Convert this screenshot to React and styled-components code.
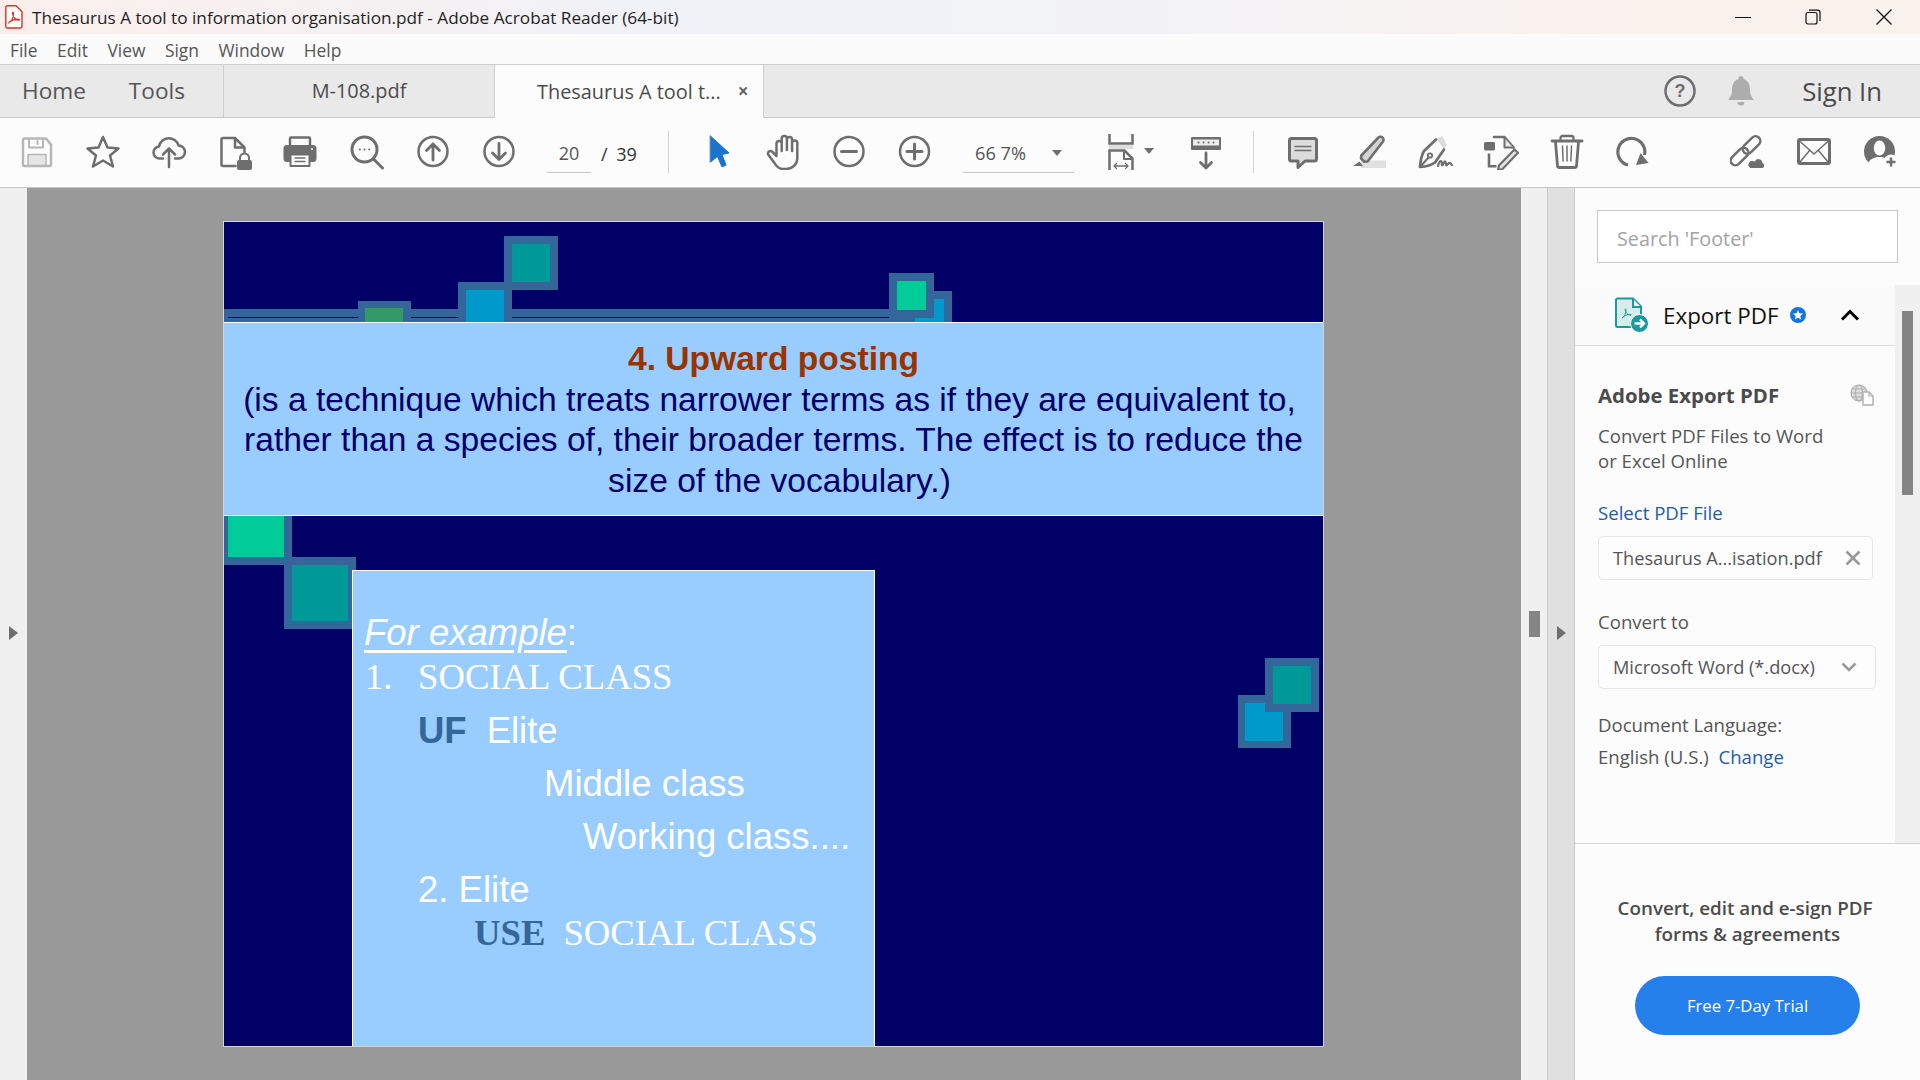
import React from "react";
import styled, { createGlobalStyle } from "styled-components";

const UI = `"Open Sans", "Noto Sans", sans-serif`;
const ARIAL = `"Liberation Sans", Arial, sans-serif`;
const TIMES = `"Liberation Serif", "Times New Roman", serif`;
const G = "#6e6e6e";

const Global = createGlobalStyle`
  html, body { margin: 0; padding: 0; background: #fff; overflow: hidden; }
  * { box-sizing: border-box; }
  #root { width: 1920px; height: 1080px; }
`;

const Shell = styled.div`
  width: 1920px; height: 1080px; display: flex; flex-direction: column; overflow: hidden;
  font-family: ${UI}; color: #444;
`;
const TitleBar = styled.div`
  height: 34px; flex: none; display: flex; align-items: center; padding-left: 5px;
  background: linear-gradient(90deg, #fbefec 0, #f0f2f7 35%, #f2f2f6 60%, #f9f1ec 85%);
`;
const TitleText = styled.span`
  margin-left: 9px; font-size: 17.2px; color: #1f1f1f; white-space: nowrap;
`;
const WinControls = styled.div`
  margin-left: auto; display: flex; padding-right: 1px;
`;
const WinCell = styled.div`
  width: 70.5px; height: 34px; display: flex; align-items: center; justify-content: center;
`;
const MenuBar = styled.div`
  height: 31px; flex: none; display: flex; align-items: center; gap: 19.5px; padding: 1px 0 0 10px;
  background: #fbfbfb; border-bottom: 1px solid #cdcdcd;
`;
const MenuItem = styled.span`
  font-size: 17.4px; color: #555;
`;
const TabBar = styled.div`
  height: 53px; flex: none; display: flex; background: #e9e9e9; border-bottom: 1px solid #c8c8c8;
`;
const HomeGroup = styled.div`
  width: 224px; height: 52px; display: flex; align-items: center; gap: 43px; padding: 0 0 2px 22px;
  border-right: 1px solid #cfcfcf;
`;
const NavLink = styled.span`
  font-size: 22.6px; color: #555;
`;
const Tab = styled.div`
  width: 270px; height: ${(p) => (p.$active ? 53 : 52)}px;
  display: flex; align-items: center; font-size: 19.9px; color: #4b4b4b; padding-bottom: 1px;
  justify-content: ${(p) => (p.$active ? "flex-start" : "center")};
  padding-left: ${(p) => (p.$active ? 42 : 0)}px;
  background: ${(p) => (p.$active ? "#fcfcfc" : "transparent")};
  border-left: ${(p) => (p.$active ? "1px solid #cfcfcf" : "0")};
  border-right: ${(p) => (p.$active ? "1px solid #cfcfcf" : "0")};
`;
const TabClose = styled.span`
  margin-left: 17px; font-size: 19px; font-weight: 700; color: #666; line-height: 1;
`;
const TabRight = styled.div`
  margin-left: auto; height: 52px; display: flex; align-items: center; padding-right: 38px;
`;
const SignIn = styled.span`
  margin-left: 46px; font-size: 25.7px; color: #4b4b4b; font-weight: 500;
`;
const BellWrap = styled.div`
  margin-left: 30px; display: flex;
`;
const Toolbar = styled.div`
  height: 70px; flex: none; display: flex; align-items: flex-start; padding: 16px 0 0 4px;
  background: #fcfcfc; border-bottom: 1px solid #c8c8c8;
`;
const Cell = styled.div`
  width: ${(p) => p.$w || 66}px; height: 36px; flex: none; display: flex; justify-content: center;
  margin-left: ${(p) => p.$ml || 0}px;
`;
const PageBox = styled.div`
  width: 44px; height: 39px; margin-left: 15px; border-bottom: 1px solid #c8c8c8;
  display: flex; align-items: center; justify-content: center; font-size: 18px; color: #555;
`;
const PageTotal = styled.div`
  margin-left: 10px; height: 39px; display: flex; align-items: center; font-size: 18px; color: #333;
  width: 37px; white-space: nowrap; word-spacing: 4px;
`;
const VDivider = styled.div`
  width: 1px; height: 42px; margin: -3px 0 0 ${(p) => p.$ml || 30}px; background: #d4d4d4; flex: none;
`;
const ZoomBox = styled.div`
  width: 111px; height: 39px; margin-left: 17px; border-bottom: 1px solid #c8c8c8; padding-left: 12px;
  display: flex; align-items: center; font-size: 18.2px; color: #555;
`;
const Caret = styled.div`
  width: 0; height: 0; flex: none; border-left: 5.5px solid transparent; border-right: 5.5px solid transparent;
  border-top: 6px solid ${G}; margin-left: ${(p) => p.$ml || 0}px; margin-top: ${(p) => p.$mt || 0}px;
`;
const Main = styled.div`
  flex: 1; min-height: 0; display: flex;
`;
const Rail = styled.div`
  width: ${(p) => p.$w}px; flex: none; background: ${(p) => p.$bg}; display: flex; align-items: center;
  justify-content: center; border-right: ${(p) => (p.$line ? "1px solid #c8c8c8" : "0")};
  padding-bottom: ${(p) => p.$pb || 0}px;
`;
const Arrow = styled.div`
  width: 0; height: 0; border-top: 7.5px solid transparent; border-bottom: 7.5px solid transparent;
  border-left: 9px solid ${G};
`;
const Canvas = styled.div`
  flex: 1; background: #999; padding: 33px 0 0 196px; overflow: hidden;
`;
const ScrollKnob = styled.div`
  width: 11px; height: 26px; background: #848484;
`;
const Slide = styled.div`
  width: 1101px; height: 826px; background: #000066; border: 1px solid #d2d2d2; position: relative;
  padding-top: 100px;
`;
const Decor = styled.svg`
  position: absolute; left: 0; top: 0;
`;
const Band = styled.div`
  position: relative; height: 194px; background: #99ccff; border-top: 1px solid #fff; border-bottom: 1px solid #fff;
  padding-top: 16px; text-align: center; font-family: ${ARIAL}; font-size: 33.6px; line-height: 40.5px; color: #000066;
`;
const BandTitle = styled.div`
  font-weight: 700; color: #993300;
`;
const BandLine = styled.div`
  white-space: nowrap; padding-left: ${(p) => p.$pl || 0}px; padding-right: ${(p) => p.$pr || 0}px;
`;
const ExampleBox = styled.div`
  position: relative; width: 523px; height: 476px; margin: 54px 0 0 128px; background: #99ccff;
  border: 1px solid #fff; border-bottom: 0; padding-top: 40px; color: #fff;
`;
const ExRow = styled.div`
  height: 44px; line-height: 44px; white-space: nowrap; margin-top: ${(p) => p.$mt || 0}px;
  padding-left: ${(p) => p.$indent}px; font-family: ${(p) => (p.$serif ? TIMES : ARIAL)};
  font-size: ${(p) => (p.$serif ? 36.7 : 36.5)}px; display: flex;
`;
const Under = styled.span`
  font-style: italic; text-decoration: underline; text-decoration-thickness: 3px; text-underline-offset: 5px;
`;
const ListNum = styled.span`
  width: 53px; flex: none;
`;
const Term = styled.span`
  font-weight: 700; color: #336699; margin-right: ${(p) => p.$mr}px;
`;
const Panel = styled.div`
  width: 345px; flex: none; background: #fcfcfc; display: flex; flex-direction: column;
`;
const SearchWrap = styled.div`
  height: 97px; flex: none; padding: 22px 22px 0;
`;
const SearchBox = styled.div`
  width: 301px; height: 53px; background: #fff; border: 1px solid #c8c8c8; display: flex; align-items: center;
  padding: 3px 0 0 19px; font-size: 19.8px; color: #a3a3a3;
`;
const PanelBody = styled.div`
  height: 558px; flex: none; display: flex;
`;
const PanelContent = styled.div`
  width: 320px; flex: none;
`;
const ExportRow = styled.div`
  height: 61px; display: flex; align-items: center; border-bottom: 1px solid #dcdcdc; padding: 0 0 0 40px;
  background: #fafafa;
`;
const ExportLabel = styled.span`
  margin-left: 14px; font-size: 22.4px; color: #111;
`;
const Badge = styled.div`
  margin-left: 11px; display: flex;
`;
const Chevron = styled.div`
  margin-left: 34px; display: flex;
`;
const Section = styled.div`
  padding-left: 23px;
`;
const SecHead = styled.div`
  height: 26px; margin-top: 36px; display: flex; align-items: center; justify-content: space-between; padding-right: 21px;
  font-size: 20.4px; font-weight: 700; color: #4b4b4b; white-space: nowrap;
`;
const Text = styled.div`
  font-size: 18.6px; line-height: ${(p) => p.$lh || 24}px; margin-top: ${(p) => p.$mt || 0}px; color: #555; white-space: nowrap;
`;
const LinkText = styled.span`
  color: #1b5dab;
`;
const Field = styled.div`
  width: ${(p) => p.$w}px; height: 44px; margin-top: 11px; border: 1px solid #e6e6e6; border-radius: 5px;
  display: flex; align-items: center; justify-content: space-between; padding: 0 ${(p) => p.$pr}px 0 14px;
  font-size: 18.2px; color: #555; background: #fdfdfd; white-space: nowrap;
`;
const Track = styled.div`
  width: 25px; flex: none; background: #f0f0f0; padding: 26px 0 0 7px;
`;
const Thumb = styled.div`
  width: 11px; height: 184px; background: #848484;
`;
const Promo = styled.div`
  flex: 1; border-top: 1px solid #d4d4d4; display: flex; flex-direction: column; align-items: center; padding-top: 52px;
`;
const PromoText = styled.div`
  font-size: 18.8px; line-height: 25.5px; font-weight: 600; color: #4b4b4b; text-align: center; white-space: nowrap;
`;
const Trial = styled.div`
  width: 225px; height: 59px; margin-top: 29px; border-radius: 30px; background: #2680eb; color: #fff;
  display: flex; align-items: center; justify-content: center; font-size: 16.7px;
`;

const Ic = ({ children, w = 36, h = 36, vb }) => (
  <svg width={w} height={h} viewBox={vb || `0 0 ${w} ${h}`} fill="none" stroke={G} strokeWidth="2.5" strokeLinecap="round" strokeLinejoin="round">
    {children}
  </svg>
);

const Save = () => (
  <Ic>
    <g stroke="#b7b7b7">
      <path d="M5.5 4.5H27l5 6v20a1.5 1.5 0 0 1-1.5 1.5h-25A1.5 1.5 0 0 1 4 30.5V6a1.5 1.5 0 0 1 1.5-1.5z" />
      <path d="M10 5v8.5h14V5" strokeWidth="2" />
      <rect x="9" y="20.5" width="18" height="11" fill="#e6e6e6" strokeWidth="1.5" />
      <path d="M18.5 7v3" strokeWidth="2" />
    </g>
  </Ic>
);
const Star = () => (
  <Ic><polygon points="18,3 22.5,13.5 33.5,14.5 25,21.5 28,32.5 18,26.5 8,32.5 11,21.5 2.5,14.5 13.5,13.5" /></Ic>
);
const Cloud = () => (
  <Ic>
    <path d="M12 24.5H9a6 6 0 0 1-1-12A10 10 0 0 1 27.5 11.5a6.5 6.5 0 0 1 0 13H24" />
    <path d="M18 33V15M12 20.5l6-6 6 6" />
  </Ic>
);
const DocLock = () => (
  <Ic>
    <path d="M18.5 32H6a1.5 1.5 0 0 1-1.5-1.5v-25A1.5 1.5 0 0 1 6 4h12l9.5 9.5V18M18 4v9.5h9.5" />
    <path d="M23 26.5V24a4.5 4.5 0 0 1 9 0v2.5" strokeWidth="2" />
    <rect x="20" y="26" width="15" height="10" rx="2" fill={G} stroke="none" />
  </Ic>
);
const Printer = () => (
  <svg width="36" height="36" viewBox="1 0 36 36" fill="none" stroke={G} strokeWidth="2.5" strokeLinecap="round" strokeLinejoin="round">
    <path d="M8 12V4.5a1 1 0 0 1 1-1h18a1 1 0 0 1 1 1V12" />
    <rect x="1.5" y="11" width="33" height="17" rx="3.5" fill={G} stroke="none" />
    <rect x="8.5" y="20.5" width="19" height="11.5" fill="#fcfcfc" strokeWidth="2" />
    <path d="M13 24h10M13 27.5h10" strokeWidth="1.3" />
    <circle cx="30" cy="15" r="1" fill="#fff" stroke="none" />
  </svg>
);
const SearchIc = () => (
  <Ic>
    <circle cx="15.5" cy="15.5" r="12.5" strokeWidth="3" />
    <path d="M24.5 25l9 9" strokeWidth="3" />
    <path d="M10.8 15.5h.1M15.5 15.5h.1M20.2 15.5h.1" strokeWidth="2" />
  </Ic>
);
const CircleArrow = ({ up }) => (
  <Ic>
    <circle cx="18" cy="17.5" r="14.5" />
    {up ? <path d="M18 26V10M11.5 16.5L18 10l6.5 6.5" strokeWidth="2.8" /> : <path d="M18 9.5v16M11.5 19L18 25.5l6.5-6.5" strokeWidth="2.8" />}
  </Ic>
);
const Cursor = () => (
  <Ic><polygon points="9.5,2 28,19 21,20.5 25,31 21,33 16.5,22.5 9.5,28" fill="#1b73cc" stroke="#1b73cc" strokeWidth="1" /></Ic>
);
const Hand = () => (
  <Ic>
    <path d="M10.5 20V9.5a2.6 2.6 0 0 1 5.2 0V17M15.7 16V4.5a2.6 2.6 0 0 1 5.2 0V16M20.9 16V5.5a2.6 2.6 0 0 1 5.2 0V17M26.1 17V9a2.6 2.6 0 0 1 5.2 0v15.5C31.3 30.5 26 35 20 35h-3c-4.5 0-6.5-2.5-8.5-6l-6-8a2.5 2.5 0 0 1 4-3l4 4" />
  </Ic>
);
const ZoomOut = () => (
  <Ic><circle cx="18" cy="17.5" r="14.5" /><path d="M10.5 17.5h15" strokeWidth="3" /></Ic>
);
const ZoomIn = () => (
  <Ic><circle cx="18.5" cy="17.5" r="14.5" /><path d="M11 17.5h15M18.5 10v15" strokeWidth="3" /></Ic>
);
const Fit = () => (
  <Ic>
    <path d="M6.5 0v9.5h23V0" strokeLinecap="butt" strokeLinejoin="miter" />
    <rect x="6" y="11" width="24" height="4" fill="#dedede" stroke="none" />
    <path d="M6.5 36V16.5h15l8 8V36" strokeLinecap="butt" strokeLinejoin="miter" />
    <path d="M21 16.5V25h8.5" strokeWidth="2" strokeLinecap="butt" />
    <path d="M11 32h14M13.5 29.5L11 32l2.5 2.5M22.5 29.5L25 32l-2.5 2.5" strokeWidth="1.3" />
  </Ic>
);
const Reader = () => (
  <Ic>
    <rect x="3" y="3" width="30" height="13" rx="1" fill={G} stroke="none" />
    <rect x="5" y="5.5" width="26" height="6" fill="#ececec" stroke="none" />
    <path d="M10.5 8.5h.1M15.5 8.5h.1M20.5 8.5h.1M25.5 8.5h.1" strokeWidth="2" />
    <path d="M18 34V19M12.5 28.5L18 34l5.5-5.5" strokeWidth="2.8" />
  </Ic>
);
const Comment = () => (
  <Ic>
    <path d="M6.5 4.5h23a2 2 0 0 1 2 2V25a2 2 0 0 1-2 2H20l-7 6.5V27H6.5a2 2 0 0 1-2-2V6.5a2 2 0 0 1 2-2z" fill="#dcdcdc" strokeWidth="3" />
    <path d="M10 12.5h16M10 16.5h16" strokeWidth="1.3" />
  </Ic>
);
const Highlighter = () => (
  <Ic>
    <rect x="10" y="26.5" width="25" height="7.5" fill="#e0e0e0" stroke="none" />
    <path d="M27 4a3 3 0 0 1 5 3.5L18.5 25l-2 2.5-3 .2-3.5-3.2.3-3z" fill="#d4d4d4" strokeWidth="2.6" />
    <path d="M8.5 27.5l3.5 4.5H2z" fill={G} stroke="none" />
  </Ic>
);
const Pen = () => (
  <Ic>
    <polygon points="19,5 25,2 30,11 27,15" fill="#dcdcdc" stroke="none" />
    <path d="M19 5.5L7 17c-2.5 4-3.5 10-4 16 6-.5 11-1.5 15-4.5l9-13" strokeWidth="2.7" />
    <path d="M3.5 32.5l8-9" strokeWidth="2" />
    <circle cx="13" cy="21.5" r="2.2" strokeWidth="1.8" />
    <path d="M21 32c1-4 2.5-6 3.5-4.5s-.5 4.5 1 3.5 2-5 3-3 0 4 1.5 3 1.5-2.5 3-2 1 2 2 2" strokeWidth="2.2" />
  </Ic>
);
const EditDoc = () => (
  <Ic>
    <path d="M11 3h10.5l9 10.5" strokeWidth="2.6" />
    <path d="M21.5 4v9.5H30" fill="#e6e6e6" strokeWidth="2" />
    <rect x="1" y="8" width="11" height="8.5" rx="1.5" fill={G} stroke="none" />
    <path d="M6 19.5v12.7h7.5" strokeWidth="2.6" strokeLinecap="butt" strokeLinejoin="miter" />
    <path d="M31.5 15.5l3.5 3.2L19.5 35l-4.5 1 1-4.5z" fill="#e6e6e6" strokeWidth="2.2" />
  </Ic>
);
const Trash = () => (
  <Ic>
    <path d="M3 7h30" strokeWidth="2.8" />
    <path d="M11.5 6V4a2 2 0 0 1 2-2h9a2 2 0 0 1 2 2v2" strokeWidth="2.3" />
    <path d="M6.5 8l2 24a1.8 1.8 0 0 0 1.8 1.5h15.4a1.8 1.8 0 0 0 1.8-1.5l2-24" strokeWidth="2.8" />
    <path d="M13.5 12l.6 15M18 12v15M22.5 12l-.6 15" strokeWidth="1.5" />
  </Ic>
);
const Rotate = () => (
  <Ic>
    <path d="M13 31A13.5 13.5 0 1 1 29.5 21" strokeWidth="3.2" strokeLinecap="butt" />
    <polygon points="21,31 33.5,29 25.5,19" fill={G} stroke="none" />
  </Ic>
);
const LinkCloud = () => (
  <Ic>
    <rect x="16.75" y=".5" width="9.5" height="21" rx="4.75" transform="rotate(45 21.5 11)" />
    <rect x="4.75" y="12" width="9.5" height="21" rx="4.75" transform="rotate(45 9.5 22.5)" />
    <path d="M20 34.5h12a3 3 0 0 0 1-5.8 4.5 4.5 0 0 0-8.5-1.7 3.5 3.5 0 0 0-4.5 7.5z" fill={G} stroke="#fcfcfc" strokeWidth="1.2" />
  </Ic>
);
const Mail = () => (
  <Ic>
    <rect x="2.5" y="5.5" width="31" height="24" rx="1.5" strokeWidth="3" />
    <path d="M3.5 7L18 20 32.5 7M3.5 28.5L14 16M32.5 28.5L22 16" strokeWidth="1.5" />
  </Ic>
);
const UserAdd = () => (
  <Ic>
    <circle cx="17.5" cy="17.5" r="15.5" fill={G} stroke="none" />
    <ellipse cx="17.5" cy="14" rx="5.8" ry="7.5" fill="#fcfcfc" stroke="none" />
    <path d="M6 30c1.5-5 6-7 11.5-7S27 25 29 30c-3 2.5-7 3.5-11.5 3.5S9 32.5 6 30z" fill="#fcfcfc" stroke="none" />
    <circle cx="29" cy="28" r="7.5" fill="#fcfcfc" stroke="none" />
    <path d="M29 23.5v9M24.5 28h9" strokeWidth="2.5" strokeLinecap="butt" />
  </Ic>
);
const PdfLogo = () => (
  <svg width="18" height="24" viewBox="0 0 18 24" fill="none">
    <path d="M2.5 .8H11l6 6V21a2 2 0 0 1-2 2H2.5a1.7 1.7 0 0 1-1.7-1.7V2.5A1.7 1.7 0 0 1 2.5 .8z" fill="#fff" stroke="#e0301e" strokeWidth="1.4" />
    <path d="M4 17.5c2.5-1.5 4.5-5.5 4.5-9 0-1.5-1.2-1.5-1 .3.4 3 3 6 6 6.3 1.5 0 1.3-1-.3-1-3-.1-6.5 1.2-9 3z" stroke="#e0301e" strokeWidth="1.2" />
  </svg>
);
const ExportIcon = () => (
  <svg width="34" height="36" viewBox="0 0 34 36" fill="none">
    <path d="M2.5 1.5H18l8 8V28a2 2 0 0 1-2 2H2.5A1.5 1.5 0 0 1 1 28.5V3a1.5 1.5 0 0 1 1.5-1.5z" fill="#d7ecec" stroke="#1a9a9a" strokeWidth="2" />
    <path d="M18 2v8h8" stroke="#1a9a9a" strokeWidth="2" fill="#fff" />
    <path d="M7 21c2.5-1.5 4-5 4-8 0-1.5-1-1.5-.8 0 .3 2.5 2.5 5 5 5.3 1.5 0 1.3-1-.2-1-2.8 0-5.8 1.5-8 3.7z" stroke="#1a9a9a" strokeWidth="1" />
    <circle cx="24.5" cy="26.5" r="9" fill="#1a9a9a" stroke="#fafafa" strokeWidth="1" />
    <path d="M19.5 26.5h9M25 22.5l4 4-4 4" stroke="#fff" strokeWidth="2.4" />
  </svg>
);
const BlueStar = () => (
  <svg width="16" height="16" viewBox="0 0 16 16">
    <circle cx="8" cy="8" r="8" fill="#1473e6" />
    <polygon points="8,3 9.4,6.3 13,6.6 10.3,9 11.1,12.5 8,10.7 4.9,12.5 5.7,9 3,6.6 6.6,6.3" fill="#fff" />
  </svg>
);
const Globe = () => (
  <svg width="24" height="22" viewBox="0 0 24 22" fill="none" stroke="#b0b0b0" strokeWidth="1.2">
    <circle cx="9" cy="9" r="8" fill="#dedede" />
    <ellipse cx="9" cy="9" rx="3.5" ry="8" />
    <path d="M1 9h16M2.5 5h13M2.5 13h13" />
    <path d="M13 8h6l4 4v9H13z" fill="#fcfcfc" strokeWidth="1.4" />
    <path d="M19 8v4h4" />
  </svg>
);

function Decoration() {
  const sq = [
    [358, 301, 53, 22, 365, 308, 38, 15, "#339966"],
    [458, 282, 54, 41, 466, 290, 38, 33, "#0099cc"],
    [504, 236, 54, 54, 512, 244, 38, 38, "#009999"],
    [907, 291, 45, 31, 915, 299, 29, 23, "#0099cc"],
    [889, 273, 45, 45, 897, 281, 29, 29, "#00cc99"],
    [224, 516, 68, 49, 228, 516, 56, 41, "#00cc99"],
    [284, 557, 72, 72, 292, 565, 56, 56, "#009999"],
    [1238, 695, 53, 53, 1245, 703, 38, 38, "#0099cc"],
    [1265, 658, 54, 54, 1273, 666, 38, 38, "#009999"],
  ];
  return (
    <Decor width="1099" height="824" viewBox="224 222 1099 824">
      <rect x="224" y="309" width="690" height="14" fill="#336699" />
      <rect x="228" y="317" width="680" height="1" fill="#000066" />
      {sq.map(([x, y, w, h, ix, iy, iw, ih, c], i) => (
        <g key={i}>
          <rect x={x} y={y} width={w} height={h} fill="#336699" />
          <rect x={ix} y={iy} width={iw} height={ih} fill={c} />
        </g>
      ))}
      <rect x="915" y="318" width="29" height="4" fill="#0099cc" />
    </Decor>
  );
}

export default function App() {
  return (
    <Shell>
      <Global />
      <TitleBar>
        <PdfLogo />
        <TitleText>Thesaurus A tool to information organisation.pdf - Adobe Acrobat Reader (64-bit)</TitleText>
        <WinControls>
          <WinCell><svg width="16" height="16" viewBox="0 0 16 16" stroke="#111" strokeWidth="1"><path d="M0 8.5h16" /></svg></WinCell>
          <WinCell>
            <svg width="16" height="16" viewBox="0 0 16 16" fill="none" stroke="#111" strokeWidth="1.2">
              <rect x="1" y="3.5" width="11" height="11.5" rx="2" />
              <path d="M4 1.2h8.5A2.5 2.5 0 0 1 15 3.7V12" />
            </svg>
          </WinCell>
          <WinCell><svg width="16" height="16" viewBox="0 0 16 16" stroke="#111" strokeWidth="1.3"><path d="M.5 .5l15 15M15.5 .5l-15 15" /></svg></WinCell>
        </WinControls>
      </TitleBar>
      <MenuBar>
        {["File", "Edit", "View", "Sign", "Window", "Help"].map((m) => <MenuItem key={m}>{m}</MenuItem>)}
      </MenuBar>
      <TabBar>
        <HomeGroup><NavLink>Home</NavLink><NavLink>Tools</NavLink></HomeGroup>
        <Tab>M-108.pdf</Tab>
        <Tab $active>Thesaurus A tool t...<TabClose>×</TabClose></Tab>
        <TabRight>
          <svg width="32" height="32" viewBox="0 0 32 32" fill="none">
            <circle cx="16" cy="16" r="14.5" stroke={G} strokeWidth="2.5" />
            <text x="16" y="22" textAnchor="middle" fontFamily={ARIAL} fontSize="18" fontWeight="700" fill={G}>?</text>
          </svg>
          <BellWrap>
            <svg width="30" height="30" viewBox="0 0 30 30" fill="#adadad">
              <path d="M15 0a2.5 2.5 0 0 1 2.5 2.5v.5C22.5 4.5 24 9 24 14c0 5 2 7.5 4 10H2c2-2.5 4-5 4-10 0-5 1.5-9.5 6.5-11v-.5A2.5 2.5 0 0 1 15 0z" />
              <path d="M11.5 26h7a3.5 3.5 0 0 1-7 0z" />
            </svg>
          </BellWrap>
          <SignIn>Sign In</SignIn>
        </TabRight>
      </TabBar>
      <Toolbar>
        <Cell><Save /></Cell>
        <Cell><Star /></Cell>
        <Cell><Cloud /></Cell>
        <Cell><DocLock /></Cell>
        <Cell><Printer /></Cell>
        <Cell><SearchIc /></Cell>
        <Cell><CircleArrow up /></Cell>
        <Cell><CircleArrow /></Cell>
        <PageBox>20</PageBox>
        <PageTotal>/ 39</PageTotal>
        <VDivider />
        <Cell $ml={17} $w={65}><Cursor /></Cell>
        <Cell $w={65}><Hand /></Cell>
        <Cell $w={65}><ZoomOut /></Cell>
        <Cell $w={65}><ZoomIn /></Cell>
        <ZoomBox>66 7%<Caret $ml={26} /></ZoomBox>
        <Cell $ml={29} $w={36}><Fit /></Cell>
        <Caret $ml={5} $mt={14} />
        <Cell $ml={34} $w={36}><Reader /></Cell>
        <VDivider $ml={29} />
        <Cell $ml={16}><Comment /></Cell>
        <Cell><Highlighter /></Cell>
        <Cell><Pen /></Cell>
        <Cell><EditDoc /></Cell>
        <Cell><Trash /></Cell>
        <Cell><Rotate /></Cell>
        <Cell $ml={49}><LinkCloud /></Cell>
        <Cell><Mail /></Cell>
        <Cell><UserAdd /></Cell>
      </Toolbar>
      <Main>
        <Rail $w={27} $bg="#f0f0f0" $pb={2}><Arrow /></Rail>
        <Canvas>
          <Slide>
            <Decoration />
            <Band>
              <BandTitle>4. Upward posting</BandTitle>
              <BandLine $pr={8}>(is a technique which treats narrower terms as if they are equivalent to,</BandLine>
              <BandLine>rather than a species of, their broader terms. The effect is to reduce the</BandLine>
              <BandLine $pl={12}>size of the vocabulary.)</BandLine>
            </Band>
            <ExampleBox>
              <ExRow $indent={11}><Under>For example</Under>:</ExRow>
              <ExRow $indent={12} $serif><ListNum>1.</ListNum>SOCIAL CLASS</ExRow>
              <ExRow $indent={65} $mt={10}><Term $mr={20}>UF</Term>Elite</ExRow>
              <ExRow $indent={191} $mt={9}>Middle class</ExRow>
              <ExRow $indent={230} $mt={9}>Working class....</ExRow>
              <ExRow $indent={65} $mt={9}>2. Elite</ExRow>
              <ExRow $indent={121} $serif $mt={-1}><Term $mr={18}>USE</Term>SOCIAL CLASS</ExRow>
            </ExampleBox>
          </Slide>
        </Canvas>
        <Rail $w={27} $bg="#f0f0f0" $line $pb={20}><ScrollKnob /></Rail>
        <Rail $w={27} $bg="#e0e0e0" $line $pb={2}><Arrow /></Rail>
        <Panel>
          <SearchWrap><SearchBox>Search 'Footer'</SearchBox></SearchWrap>
          <PanelBody>
            <PanelContent>
              <ExportRow>
                <ExportIcon />
                <ExportLabel>Export PDF</ExportLabel>
                <Badge><BlueStar /></Badge>
                <Chevron>
                  <svg width="20" height="12" viewBox="0 0 20 12" fill="none" stroke="#000" strokeWidth="3"><path d="M2 10.5l8-8 8 8" /></svg>
                </Chevron>
              </ExportRow>
              <Section>
                <SecHead>Adobe Export PDF<Globe /></SecHead>
                <Text $lh={25} $mt={15}>Convert PDF Files to Word<br />or Excel Online</Text>
                <Text $mt={28}><LinkText>Select PDF File</LinkText></Text>
                <Field $w={275} $pr={11}>
                  Thesaurus A...isation.pdf
                  <svg width="16" height="16" viewBox="0 0 16 16" stroke="#999" strokeWidth="2.5"><path d="M1.5 1.5l13 13M14.5 1.5l-13 13" /></svg>
                </Field>
                <Text $mt={30}>Convert to</Text>
                <Field $w={278} $pr={18}>
                  Microsoft Word (*.docx)
                  <svg width="16" height="10" viewBox="0 0 16 10" fill="none" stroke="#999" strokeWidth="2.5"><path d="M1.5 1.5L8 8l6.5-6.5" /></svg>
                </Field>
                <Text $mt={24}>Document Language:</Text>
                <Text $mt={8}>English (U.S.)&nbsp; <LinkText>Change</LinkText></Text>
              </Section>
            </PanelContent>
            <Track><Thumb /></Track>
          </PanelBody>
          <Promo>
            <PromoText>Convert, edit and e-sign PDF&nbsp;<br />forms &amp; agreements</PromoText>
            <Trial>Free 7-Day Trial</Trial>
          </Promo>
        </Panel>
      </Main>
    </Shell>
  );
}
